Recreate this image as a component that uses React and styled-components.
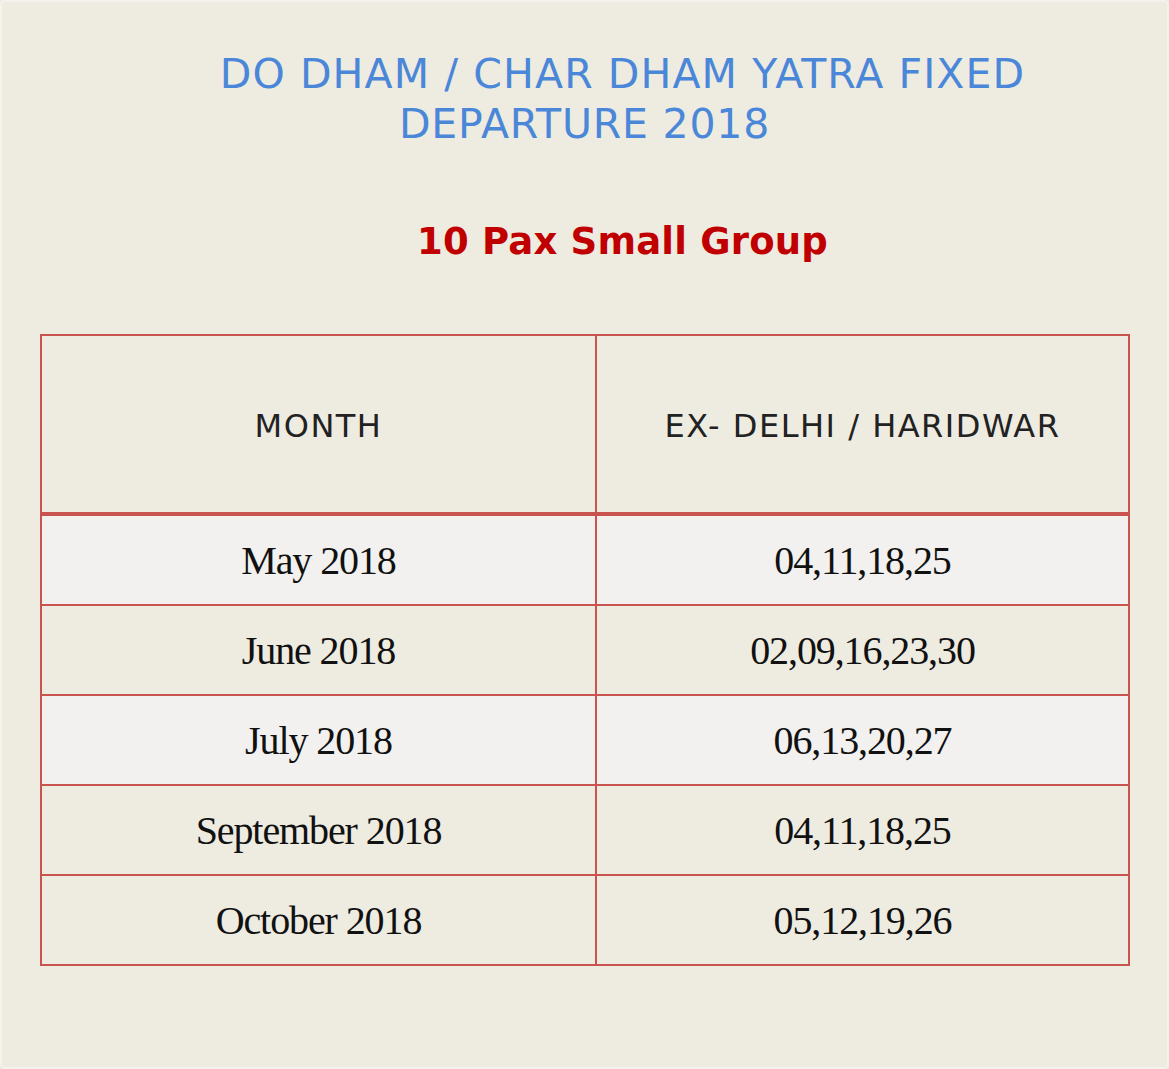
import React from 'react';
import styled, { createGlobalStyle } from 'styled-components';

const GlobalStyle = createGlobalStyle`
  html, body {
    margin: 0;
    padding: 0;
    background: #eeebe1;
  }
`

const Page = styled.div`
  width: 1169px;
  height: 1069px;
  box-sizing: border-box;
  background: #eeebe1;
  border: 2px solid #f4f2ec;
  border-radius: 5px;
  padding-top: 47px;
`

const Title = styled.h1`
  margin: 0;
  font-family: 'DejaVu Sans', Verdana, sans-serif;
  font-weight: normal;
  font-size: 41px;
  line-height: 50px;
  color: #4a87d9;
  text-align: center;
`

const Line = styled.div`
  padding-left: ${p => p.$shift || 0}px;
  letter-spacing: ${p => p.$spacing || 0}px;
`

const Subtitle = styled.h2`
  margin: 71px 0 0;
  padding-left: 76px;
  font-family: 'DejaVu Sans', Verdana, sans-serif;
  font-weight: bold;
  font-size: 37px;
  line-height: 44px;
  letter-spacing: 0.2px;
  color: #c00000;
  text-align: center;
`

const Table = styled.table`
  margin: 70px 0 0 38px;
  width: 1090px;
  border-collapse: collapse;
  table-layout: fixed;
`

const HeadCell = styled.th`
  height: 172px;
  padding: 4px 0 0;
  border: 2px solid #c9544f;
  border-bottom: 4px solid #c9544f;
  font-family: 'DejaVu Sans', Verdana, sans-serif;
  font-weight: normal;
  font-size: 32px;
  letter-spacing: 1.5px;
  color: #222;
  text-align: center;
  vertical-align: middle;
`

const Row = styled.tr`
  background: ${p => (p.$light ? '#f2f1ef' : '#eeebe1')};
`

const Cell = styled.td`
  height: 88px;
  padding: 0;
  border: 2px solid #c9544f;
  font-family: 'Liberation Serif', 'Times New Roman', serif;
  font-size: 40px;
  letter-spacing: -1.1px;
  color: #111;
  text-align: center;
  vertical-align: middle;
`

// only the May and July rows are shaded lighter
const departures = [
  { month: 'May 2018', dates: '04,11,18,25', light: true },
  { month: 'June 2018', dates: '02,09,16,23,30' },
  { month: 'July 2018', dates: '06,13,20,27', light: true },
  { month: 'September 2018', dates: '04,11,18,25' },
  { month: 'October 2018', dates: '05,12,19,26' },
]

const App = () => (
  <>
    <GlobalStyle />
    <Page>
      <Title>
        <Line $shift={76} $spacing={1.1}>DO DHAM / CHAR DHAM YATRA FIXED</Line>
        <Line $spacing={0.8}>DEPARTURE 2018</Line>
      </Title>
      <Subtitle>10 Pax Small Group</Subtitle>
      <Table>
        <colgroup>
          <col style={{ width: 555 }} />
          <col />
        </colgroup>
        <thead>
          <tr>
            <HeadCell>MONTH</HeadCell>
            <HeadCell>EX- DELHI / HARIDWAR</HeadCell>
          </tr>
        </thead>
        <tbody>
          {departures.map(d => (
            <Row key={d.month} $light={d.light}>
              <Cell>{d.month}</Cell>
              <Cell>{d.dates}</Cell>
            </Row>
          ))}
        </tbody>
      </Table>
    </Page>
  </>
)

export default App;
